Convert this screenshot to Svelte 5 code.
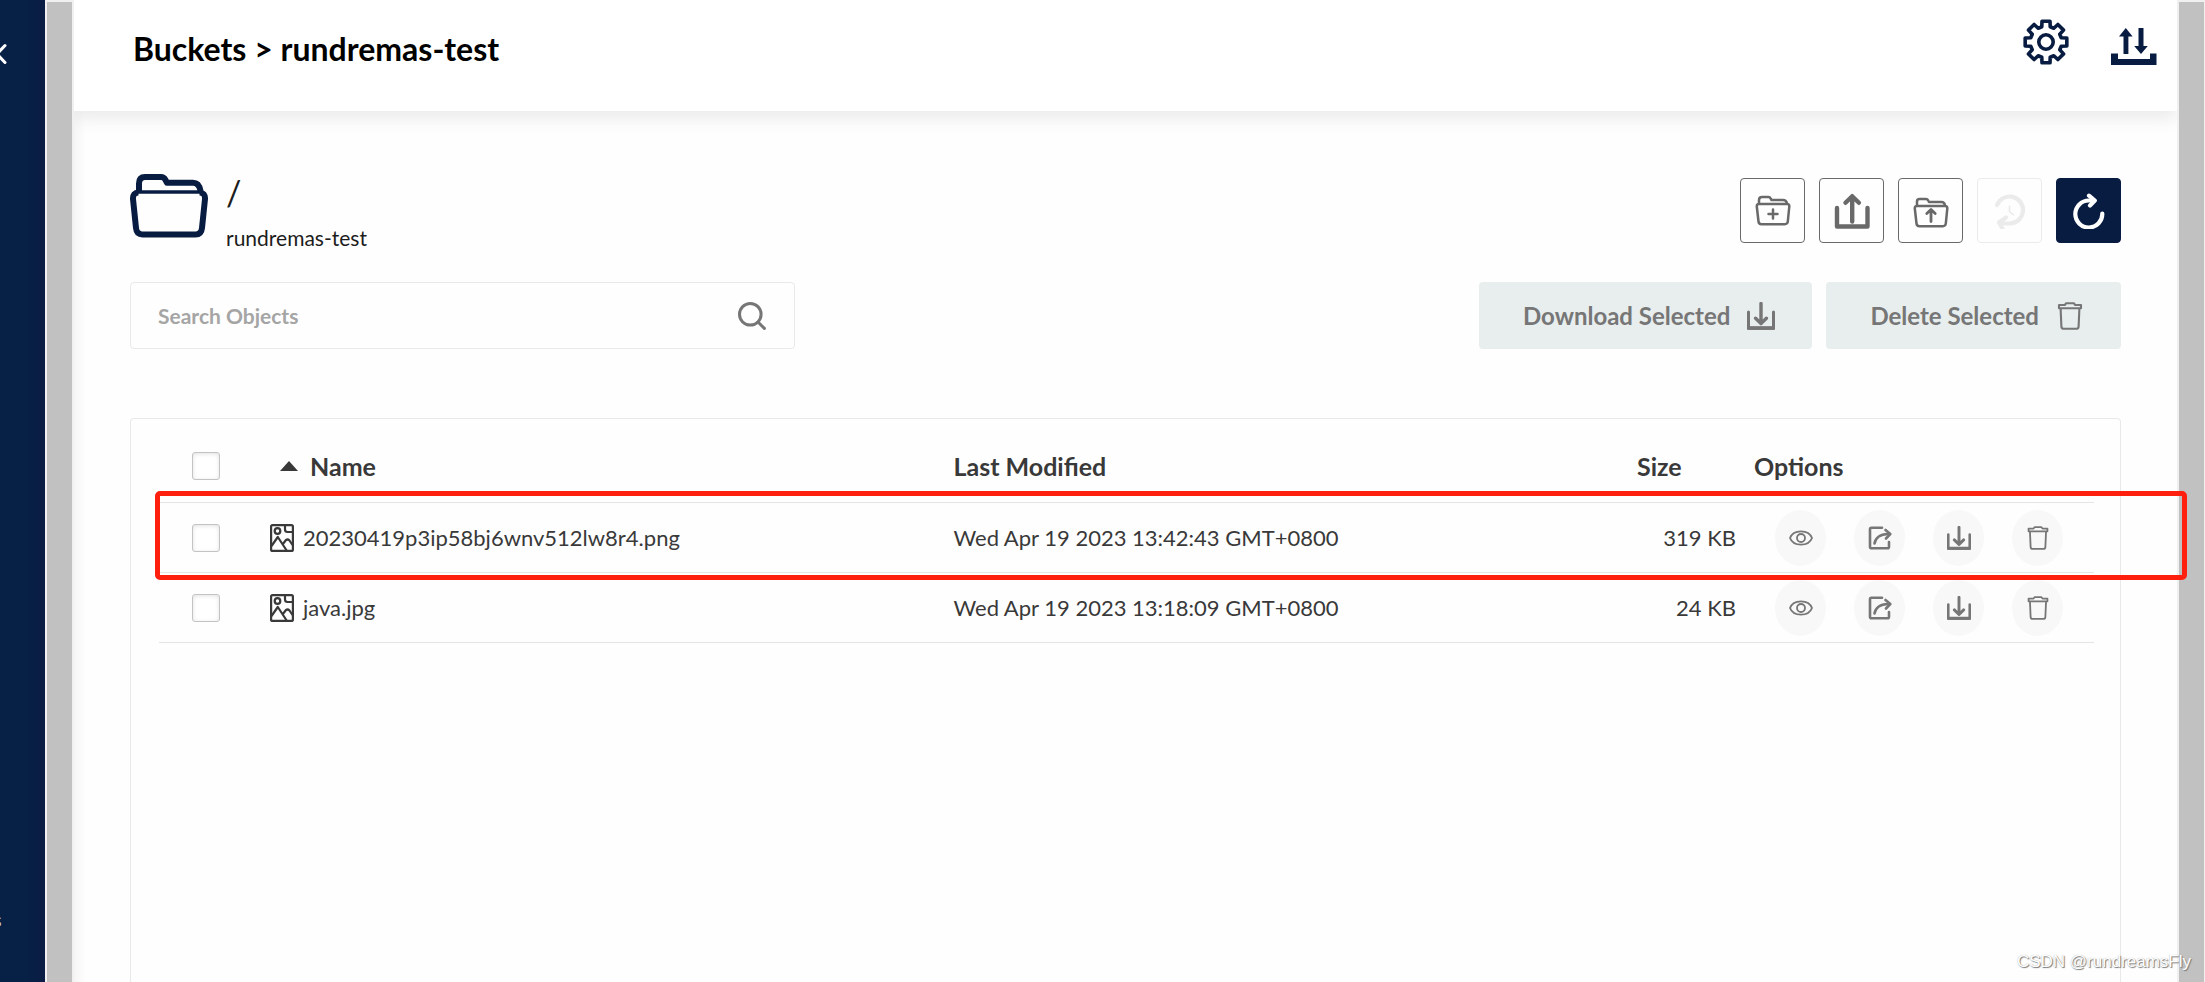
<script>
  const files = [
    { name: '20230419p3ip58bj6wnv512lw8r4.png', modified: 'Wed Apr 19 2023 13:42:43 GMT+0800', size: '319 KB' },
    { name: 'java.jpg', modified: 'Wed Apr 19 2023 13:18:09 GMT+0800', size: '24 KB' }
  ];

  // Eight-toothed gear outline, built once from polar coordinates.
  const gear = (() => {
    const pts = [];
    for (let i = 0; i < 8; i++) {
      const base = (i * Math.PI) / 4 - Math.PI / 2;
      for (const [da, r] of [[-0.27, 15.8], [-0.19, 21.2], [0.19, 21.2], [0.27, 15.8]]) {
        pts.push(`${(23 + r * Math.cos(base + da)).toFixed(2)} ${(23 + r * Math.sin(base + da)).toFixed(2)}`);
      }
    }
    return `M${pts.join('L')}Z`;
  })();
</script>

{#snippet download()}
  <svg viewBox="0 0 28 28" fill="none" stroke="currentColor" aria-hidden="true">
    <path d="M1.5 10v16.2h25V10" stroke-width="3" stroke-linecap="round" />
    <path d="M1 26h26" stroke-width="3.6" />
    <path d="M14 1.5v20M8.6 16.200l5.400 5.400 5.400-5.400" stroke-width="3.400" stroke-linecap="round" stroke-linejoin="round" />
  </svg>
{/snippet}

{#snippet trash()}
  <svg viewBox="0 0 28 28" fill="none" stroke="currentColor" stroke-width="2.100" stroke-linejoin="round" aria-hidden="true">
    <path d="M3 3h5.800l1.400-1.800h7.600L19.200 3H25v3.200H3z" />
    <path d="M4.600 6.200l.8 18.400q.2 2.200 2.400 2.200h12.400q2.200 0 2.400-2.200l.8-18.400" />
  </svg>
{/snippet}

<div class="app">
  <aside class="sidebar">
    <button class="collapse" aria-label="Collapse menu">
      <svg viewBox="0 0 12 22" fill="none" stroke="currentColor" stroke-width="3" stroke-linecap="round" aria-hidden="true">
        <path d="M10 2.500L2 11l8 8.500" />
      </svg>
    </button>
    <span class="menu-tail">s</span>
  </aside>
  <div class="scrollbar left"></div>

  <main>
    <header>
      <h1>Buckets &gt; rundremas-test</h1>
      <nav>
        <button aria-label="Configure bucket">
          <svg viewBox="0 0 46 46" fill="none" stroke="currentColor" stroke-width="3.600" stroke-linejoin="round" aria-hidden="true">
            <path d={gear} />
            <circle cx="23" cy="23" r="7.200" />
          </svg>
        </button>
        <button aria-label="Transfers">
          <svg viewBox="0 0 46 46" fill="currentColor" aria-hidden="true">
            <path d="M0 34.500h7v5.500h32v-5.500h6.500V46H0z" />
            <path d="M12.500 35V17.500H8L14.800 9l6.800 8.500h-4.200V35z" />
            <path d="M27.500 9h5v18h4.300L30 35l-6.800-8h4.300z" />
          </svg>
        </button>
      </nav>
    </header>

    <div class="content">
      <section class="location">
        <svg class="folder" viewBox="0 0 78 64" fill="none" stroke="currentColor" stroke-linejoin="round" aria-hidden="true">
          <path d="M9 17V9.500Q9 3 15 3h16q3 0 4.500 3l1.500 2.800h26q6 0 7.500 8" stroke-width="6" />
          <path d="M8 18h62" stroke-width="3.500" />
          <path d="M8.500 18.500Q2.800 18.500 3 25l3 29q.6 6.500 6.500 6.500h53q5.900 0 6.500-6.500l3-29q.2-6.500-5.500-6.500" stroke-width="6" />
        </svg>
        <div class="names">
          <h2>/</h2>
          <p>rundremas-test</p>
        </div>
        <div class="actions">
          <button aria-label="Create new path">
            <svg viewBox="0 0 36 36" fill="none" stroke="currentColor" stroke-width="2.500" stroke-linejoin="round" stroke-linecap="round" aria-hidden="true">
              <path d="M4 10.500V7q0-3 3-3h6.500q1.500 0 2.200 1.700L16.500 7H28q3.400 0 4 3.500" />
              <path d="M4 11h28q2.500 0 2.300 2.500l-1.500 15q-.3 2.700-3 2.700H6.500q-2.700 0-3-2.700l-1.700-15Q1.600 11 4 11z" />
              <path d="M18 16.500v9M13.500 21h9" />
            </svg>
          </button>
          <button aria-label="Upload file">
            <svg viewBox="0 0 36 36" fill="none" stroke="currentColor" stroke-width="4.400" stroke-linecap="round" stroke-linejoin="round" aria-hidden="true">
              <path d="M3 15v18.500h30.500V15" />
              <path d="M18.200 28.500V4M11.500 9.800l6.700-6.600 6.700 6.600" />
            </svg>
          </button>
          <button aria-label="Upload folder">
            <svg viewBox="0 0 36 36" fill="none" stroke="currentColor" stroke-width="2.500" stroke-linejoin="round" stroke-linecap="round" aria-hidden="true">
              <path d="M4 12V8.500q0-2.500 2.500-2.500H13q1.500 0 2.200 1.500L16 9h12.500q3 0 3.500 3.500" />
              <path d="M4 13h28q2.500 0 2.300 2.500l-1.500 15q-.3 2.700-3 2.700H6.500q-2.700 0-3-2.700l-1.700-15Q1.600 13 4 13z" />
              <path d="M18 28.500V17M13.800 20.500L18 16.500l4.200 4" stroke-width="2.800" />
            </svg>
          </button>
          <button class="faded" aria-label="Rewind" disabled>
            <svg viewBox="0 0 36 36" fill="none" stroke="currentColor" stroke-linecap="round" stroke-linejoin="round" aria-hidden="true">
              <path d="M5 12A13.500 13.500 0 1 1 18 30.500H9" stroke-width="4.200" />
              <path d="M14 24.500l-7 5 3.500 6" stroke-width="4.200" />
              <path d="M17.500 13v5.500l4 3.500" stroke-width="1.600" />
            </svg>
          </button>
          <button class="primary" aria-label="Refresh">
            <svg viewBox="0 0 36 36" fill="none" stroke="currentColor" stroke-width="4.200" stroke-linecap="round" stroke-linejoin="round" aria-hidden="true">
              <path d="M31.300 20.500A13.500 13.500 0 1 1 18 7.500h5" />
              <path d="M18 2.700L23.800 7.500 19 12.500" />
            </svg>
          </button>
        </div>
      </section>

      <section class="toolbar">
        <label class="search">
          <input type="text" placeholder="Search Objects" aria-label="Search Objects" />
          <svg viewBox="0 0 28 28" fill="none" stroke="currentColor" stroke-width="3" stroke-linecap="round" aria-hidden="true">
            <circle cx="12.300" cy="12.300" r="10.800" />
            <path d="M20 20l6.400 6.400" />
          </svg>
        </label>
        <div class="bulk">
          <button>Download Selected {@render download()}</button>
          <button>Delete Selected {@render trash()}</button>
        </div>
      </section>

      <section class="panel">
        <table>
          <thead>
            <tr>
              <th class="check"><input type="checkbox" aria-label="Select all" /></th>
              <th class="name">
                <span class="sort"><svg viewBox="0 0 18 10" aria-hidden="true"><path d="M9 0l9 10H0z" fill="currentColor" /></svg>Name</span>
              </th>
              <th>Last Modified</th>
              <th class="size">Size</th>
              <th class="options">Options</th>
            </tr>
          </thead>
          <tbody>
            {#each files as file}
              <tr>
                <td class="check"><input type="checkbox" aria-label={`Select ${file.name}`} /></td>
                <td>
                  <span class="file">
                    <svg viewBox="0 0 24 28" fill="none" stroke="currentColor" stroke-width="2.200" stroke-linejoin="round" aria-hidden="true">
                      <rect x="1.100" y="1.100" width="21.800" height="25.800" rx="1.500" />
                      <path d="M15 1v4.500q0 2.500 2.500 2.500H23" />
                      <circle cx="7.500" cy="7" r="2.800" />
                      <path d="M1.500 22L7.800 13 17 27M12.500 20.500l3.500-4.500q1.800-1.200 3.500.5l3 4.500" />
                    </svg>
                    {file.name}
                  </span>
                </td>
                <td>{file.modified}</td>
                <td class="size">{file.size}</td>
                <td class="options">
                  <div class="row-actions">
                    <button aria-label="Preview">
                      <svg viewBox="0 0 24 24" fill="none" stroke="currentColor" stroke-width="1.800" aria-hidden="true">
                        <path d="M1 12Q3.500 5.300 12 5.300T23 12Q20.500 18.700 12 18.700T1 12z" />
                        <circle cx="12" cy="12" r="4" />
                      </svg>
                    </button>
                    <button aria-label="Share">
                      <svg viewBox="0 0 24 24" fill="none" stroke="currentColor" stroke-width="2.600" stroke-linecap="round" stroke-linejoin="round" aria-hidden="true">
                        <path d="M14 1.800H3.500q-1.500 0-1.500 1.500v17.400q0 1.500 1.500 1.500h16q1.500 0 1.500-1.500V16" />
                        <path d="M6.500 17.500Q8 8.500 20 8" />
                        <path d="M17.500 4l4.800 4-4.300 4.500" />
                      </svg>
                    </button>
                    <button aria-label="Download">{@render download()}</button>
                    <button aria-label="Delete">{@render trash()}</button>
                  </div>
                </td>
              </tr>
            {/each}
          </tbody>
        </table>
        <div class="highlight"></div>
      </section>
    </div>
  </main>

  <div class="scrollbar right"></div>
  <div class="watermark">CSDN @rundreamsFly</div>
</div>

<style>
  :global(body) {
    margin: 0;
    background: #fefefe;
  }

  .app {
    position: relative;
    display: flex;
    height: 100vh;
    overflow: hidden;
    font-family: Lato, "Liberation Sans", sans-serif;
    color: #393939;
  }

  button {
    display: flex;
    align-items: center;
    justify-content: center;
    padding: 0;
    border: 0;
    background: none;
    font: inherit;
    color: inherit;
  }

  h1,
  h2,
  p {
    margin: 0;
  }

  .sidebar {
    flex: none;
    display: flex;
    flex-direction: column;
    justify-content: space-between;
    width: 45px;
    padding: 43px 0 51px;
    box-sizing: border-box;
    overflow: hidden;
    background: linear-gradient(90deg, #072046 60%, #0a1c44);
    color: #fff;
  }

  .collapse {
    width: 12px;
    margin-left: -5px;
  }

  .collapse svg {
    width: 12px;
    height: 22px;
  }

  .menu-tail {
    margin-left: -7px;
    font-size: 20px;
    line-height: 24px;
    color: #c3cad6;
  }

  .scrollbar {
    flex: none;
    box-sizing: border-box;
    border: solid #f0f0f0;
    border-width: 2px 2px 0;
    background: #c1c1c1;
  }

  .scrollbar.left {
    width: 29px;
  }

  .scrollbar.right {
    width: 28px;
    border-right-width: 1px;
  }

  main {
    flex: 1;
    display: flex;
    flex-direction: column;
    min-width: 0;
    background: linear-gradient(90deg, #f5f5f5, #fefefe 12px);
  }

  header {
    display: flex;
    justify-content: space-between;
    align-items: flex-start;
    height: 111px;
    padding: 19px 20px 0 59px;
    box-sizing: border-box;
    background: #fff;
    box-shadow: 0 8px 16px rgba(0, 0, 0, 0.08);
    clip-path: inset(0 0 -30px 0);
  }

  h1 {
    font-size: 32px;
    line-height: 60px;
    font-weight: 700;
    color: #000;
  }

  nav {
    display: flex;
    gap: 42px;
    color: #081c42;
  }

  nav svg {
    display: block;
    width: 46px;
    height: 46px;
  }

  .content {
    flex: 1;
    display: flex;
    flex-direction: column;
    padding: 63px 56px 0;
  }

  .location {
    display: flex;
    align-items: flex-start;
  }

  .folder {
    width: 78px;
    height: 64px;
    color: #081c42;
  }

  .names {
    flex: 1;
    margin-left: 18px;
    color: #1c1c1c;
  }

  h2 {
    font-size: 34px;
    line-height: 38px;
    font-weight: 400;
  }

  .names p {
    margin-top: 12px;
    font-size: 21px;
    line-height: 28px;
  }

  .actions {
    display: flex;
    gap: 14px;
    padding-top: 4px;
  }

  .actions button {
    width: 65px;
    height: 65px;
    box-sizing: border-box;
    border: 1px solid #696969;
    border-radius: 4px;
    color: #696969;
  }

  .actions svg {
    width: 36px;
    height: 36px;
  }

  .actions .faded {
    border-color: #ebebeb;
    color: #ebebeb;
  }

  .actions .primary {
    border-color: #081c42;
    background: #081c42;
    color: #fff;
  }

  .toolbar {
    display: flex;
    justify-content: space-between;
    margin-top: 30px;
  }

  .search {
    display: flex;
    align-items: center;
    width: 665px;
    height: 67px;
    padding: 0 28px 0 27px;
    box-sizing: border-box;
    border: 1px solid #e8eaea;
    border-radius: 4px;
    color: #767676;
  }

  .search input {
    flex: 1;
    min-width: 0;
    padding: 0;
    border: 0;
    outline: 0;
    background: none;
    font: 700 21px/28px Lato, "Liberation Sans", sans-serif;
    color: #393939;
  }

  .search input::placeholder {
    color: #a5a5a5;
    opacity: 1;
  }

  .search svg,
  .bulk svg {
    width: 28px;
    height: 28px;
  }

  .bulk {
    display: flex;
    gap: 14px;
  }

  .bulk button {
    gap: 17px;
    height: 67px;
    padding: 0 37px 0 44px;
    border-radius: 4px;
    background: #e8edee;
    font-size: 24px;
    font-weight: 700;
    line-height: 28px;
    color: #767676;
  }

  .panel {
    position: relative;
    flex: 1;
    margin-top: 69px;
    padding: 13px 26px 0 28px;
    border: 1px solid #e8eaea;
    border-bottom: 0;
    border-radius: 4px 4px 0 0;
  }

  table {
    width: 100%;
    table-layout: fixed;
    border-collapse: separate;
    border-spacing: 0;
  }

  th,
  td {
    height: 69px;
    padding: 0;
    border-bottom: 1px solid #e5e5e5;
    text-align: left;
    vertical-align: middle;
    white-space: nowrap;
  }

  th {
    height: 68px;
    padding-bottom: 2px;
    font-size: 25px;
    font-weight: 700;
  }

  td {
    font-size: 22px;
  }

  .check {
    width: 111px;
  }

  .check input {
    display: block;
    appearance: none;
    width: 28px;
    height: 28px;
    margin: 0 0 0 33px;
    box-sizing: border-box;
    border: 1px solid #c3c3c3;
    border-radius: 3px;
    background: #fff;
    box-shadow: inset 0 1px 4px rgba(0, 0, 0, 0.12);
  }

  .sort {
    display: flex;
    align-items: center;
    gap: 12px;
    padding-left: 10px;
  }

  .sort svg {
    width: 18px;
    height: 10px;
  }

  .file {
    display: flex;
    align-items: center;
    gap: 9px;
  }

  .file svg {
    width: 24px;
    height: 28px;
  }

  .size {
    width: 99px;
  }

  td.size {
    text-align: right;
  }

  .options {
    width: 340px;
    padding-left: 18px;
  }

  .row-actions {
    display: flex;
    gap: 28px;
    padding-left: 21px;
  }

  .row-actions button {
    width: 51px;
    height: 56px;
    border-radius: 50%;
    background: #f8f8f8;
    color: #767676;
  }

  .row-actions svg {
    width: 24px;
    height: 24px;
  }

  .highlight {
    position: absolute;
    z-index: 2;
    top: 72px;
    left: 24px;
    right: -67px;
    height: 79px;
    border: 5px solid #ff1f0f;
    border-radius: 5px;
    pointer-events: none;
  }

  .watermark {
    position: absolute;
    z-index: 3;
    right: 14px;
    bottom: 9px;
    font: 17px/22px "Liberation Sans", sans-serif;
    color: #fff;
    text-shadow: 1px 1px 1px #777, 0 0 1px #aaa;
  }
</style>
